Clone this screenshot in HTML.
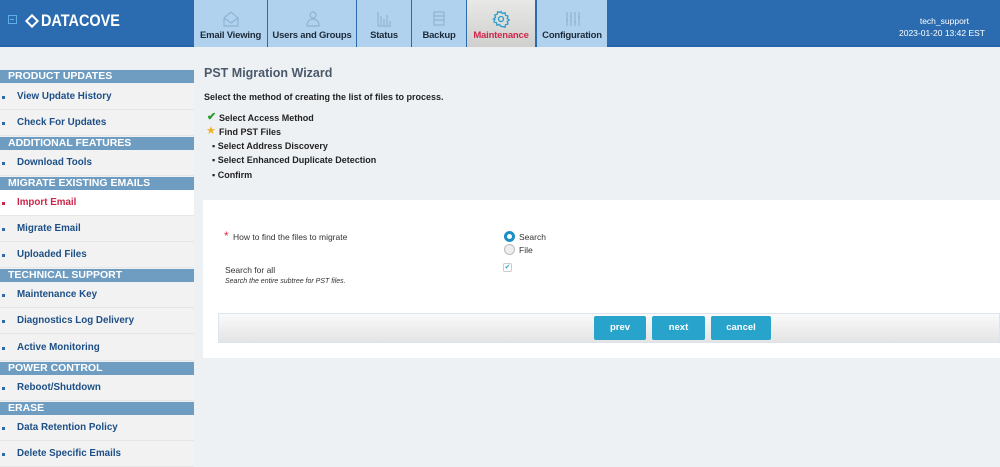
<!DOCTYPE html>
<html><head><style>
*{margin:0;padding:0;box-sizing:border-box}
body{width:1000px;height:467px;overflow:hidden;background:#eef1f4;font-family:"Liberation Sans",sans-serif;position:relative}
.abs{position:absolute}
#hdr{left:0;top:0;width:1000px;height:47px;background:#2b6cb0;border-bottom:2px solid #2563a8}
.tab{position:absolute;top:0;height:47px;background:#b0d2ee;font-size:9.5px;font-weight:bold;color:#1d2a3a;text-align:center;padding-top:30px;letter-spacing:-0.2px}
.tab svg{position:absolute;left:50%;top:10px;margin-left:-9px}
.sh{position:absolute;left:0;width:194px;height:13px;background:#6f9dc1;color:#fff;font-size:10.5px;font-weight:bold;padding-left:8px;line-height:13px}
.it{position:absolute;left:0;width:194px;height:26px;background:#f2f2f2;border-bottom:1px solid #e6e6e6;color:#1d4f86;font-size:9.8px;font-weight:bold;line-height:26px;padding-left:17px}
.it:before{content:"";position:absolute;left:2px;top:12px;width:3px;height:3px;background:#2f6aa8}
.it.act{background:#fff;color:#d0254a}
.it.act:before{background:#d0254a}
.t{position:absolute;font-size:9.5px;color:#222;font-weight:bold}
.btn{position:absolute;top:316px;height:24px;background:#27a3cc;color:#fff;font-size:9.5px;font-weight:bold;text-align:center;line-height:24px;border-radius:2px}
</style></head><body>
<div id="hdr" class="abs">
 <div class="abs" style="left:8px;top:15px;width:9px;height:9px;border:1.5px solid #5fb0e6"><div style="position:absolute;left:1px;top:2.5px;width:4px;height:1.5px;background:#5fb0e6"></div></div>
 <div class="abs" style="left:27px;top:16px;width:10px;height:10px;border:2px solid #fff;transform:rotate(45deg)"></div>
 <div class="abs" style="left:41px;top:11px;color:#fff;font-weight:bold;font-size:17px;transform:scaleX(0.85);transform-origin:left">DATACOVE</div>
 <div class="tab" style="left:194px;width:73px">Email Viewing<svg width="18" height="18" viewBox="0 0 18 18" fill="none" stroke="#8fb3d3" stroke-width="1.2"><path d="M2 8l7-6 7 6v8H2z M2 8l7 5 7-5"/></svg></div>
 <div class="tab" style="left:268px;width:88px">Users and Groups<svg width="18" height="18" viewBox="0 0 18 18" fill="none" stroke="#8fb3d3" stroke-width="1.2"><circle cx="10" cy="5" r="3"/><path d="M4 16c0-5 3-7 6-7s6 2 6 7z"/></svg></div>
 <div class="tab" style="left:357px;width:54px">Status<svg width="18" height="18" viewBox="0 0 18 18" fill="none" stroke="#8fb3d3" stroke-width="1.2"><path d="M3 2v14h13M6 15V6M9 15V9M12 15V5M15 15v-4"/></svg></div>
 <div class="tab" style="left:412px;width:54px">Backup<svg width="18" height="18" viewBox="0 0 18 18" fill="none" stroke="#8fb3d3" stroke-width="1.2"><rect x="4" y="2" width="10" height="13"/><path d="M4 6h10M4 10h10"/></svg></div>
 <div class="tab" style="left:467px;width:68px;background:linear-gradient(#e8e8e6,#cfcfcd);color:#d0254a">Maintenance<svg width="18" height="18" viewBox="0 0 18 18" fill="none" stroke="#2a9ccc" stroke-width="1.3"><circle cx="9" cy="9" r="2.5"/><path d="M9 1.5l1.5 2 2.5-.8.5 2.5 2.5.8-.8 2.5 2 1.5-2 1.5.8 2.5-2.5.8-.5 2.5-2.5-.8L9 16.5l-1.5-2-2.5.8-.5-2.5-2.5-.8.8-2.5L1.5 9l2-1.5-.8-2.5 2.5-.8.5-2.5 2.5.8z"/></svg></div>
 <div class="tab" style="left:537px;width:70px">Configuration<svg width="18" height="18" viewBox="0 0 18 18" fill="none" stroke="#8fb3d3" stroke-width="1.2"><path d="M4 2v14M8 2v14M12 2v14M16 2v14M3 10h2M7 6h2M11 12h2M15 7h2"/></svg></div>
 <div class="abs" style="left:880px;top:15px;width:105px;text-align:right;color:#fff;font-size:8.5px;line-height:12px"><div style="padding-right:16px">tech_support</div>2023-01-20 13:42 EST</div>
</div>

<div class="sh" style="top:70px">PRODUCT UPDATES</div>
<div class="it" style="top:84px">View Update History</div>
<div class="it" style="top:110px">Check For Updates</div>
<div class="sh" style="top:137px">ADDITIONAL FEATURES</div>
<div class="it" style="top:150px">Download Tools</div>
<div class="sh" style="top:177px">MIGRATE EXISTING EMAILS</div>
<div class="it act" style="top:190px">Import Email</div>
<div class="it" style="top:216px">Migrate Email</div>
<div class="it" style="top:242px">Uploaded Files</div>
<div class="sh" style="top:269px">TECHNICAL SUPPORT</div>
<div class="it" style="top:282px">Maintenance Key</div>
<div class="it" style="top:308px">Diagnostics Log Delivery</div>
<div class="it" style="top:335px">Active Monitoring</div>
<div class="sh" style="top:362px">POWER CONTROL</div>
<div class="it" style="top:375px">Reboot/Shutdown</div>
<div class="sh" style="top:402px">ERASE</div>
<div class="it" style="top:415px">Data Retention Policy</div>
<div class="it" style="top:441px">Delete Specific Emails</div>

<div class="abs" style="left:204px;top:66px;font-size:12.5px;font-weight:bold;color:#4a5a6a">PST Migration Wizard</div>
<div class="t" style="left:204px;top:92px;font-size:9px">Select the method of creating the list of files to process.</div>
<div class="abs" style="left:207px;top:110px;color:#2a9a2a;font-size:11px;font-weight:bold">✔</div>
<div class="t" style="left:219px;top:113px;font-size:9px">Select Access Method</div>
<div class="abs" style="left:206px;top:124px;color:#f0b020;font-size:11px">★</div>
<div class="t" style="left:219px;top:127px;font-size:9px">Find PST Files</div>
<div class="t" style="left:212px;top:141px;font-size:9px">▪ Select Address Discovery</div>
<div class="t" style="left:212px;top:155px;font-size:9px">▪ Select Enhanced Duplicate Detection</div>
<div class="t" style="left:212px;top:170px;font-size:9px">▪ Confirm</div>

<div class="abs" style="left:203px;top:200px;width:797px;height:158px;background:#fff"></div>
<div class="abs" style="left:224px;top:229px;color:#e03050;font-size:12px">*</div>
<div class="abs" style="left:233px;top:232px;font-size:8.5px;color:#333">How to find the files to migrate</div>
<div class="abs" style="left:504px;top:231px;width:11px;height:11px;border-radius:50%;border:3px solid #1b8fc4"></div>
<div class="abs" style="left:519px;top:232px;font-size:8.5px;color:#333">Search</div>
<div class="abs" style="left:504px;top:244px;width:11px;height:11px;border-radius:50%;border:1px solid #bbb;background:#eee"></div>
<div class="abs" style="left:519px;top:245px;font-size:8.5px;color:#333">File</div>
<div class="abs" style="left:225px;top:265px;font-size:8.5px;color:#333">Search for all</div>
<div class="abs" style="left:225px;top:278px;font-size:7px;font-style:italic;color:#333">Search the entire subtree for PST files.</div>
<div class="abs" style="left:503px;top:263px;width:9px;height:9px;border:1px solid #ccc;border-radius:2px;color:#27a3d8;font-size:7px;line-height:8px;text-align:center">✔</div>

<div class="abs" style="left:218px;top:313px;width:782px;height:30px;background:linear-gradient(#fafafa,#e4e4e4);border:1px solid #dde4ec"></div>
<div class="btn" style="left:594px;width:52px">prev</div>
<div class="btn" style="left:652px;width:53px">next</div>
<div class="btn" style="left:711px;width:60px">cancel</div>
</body></html>
